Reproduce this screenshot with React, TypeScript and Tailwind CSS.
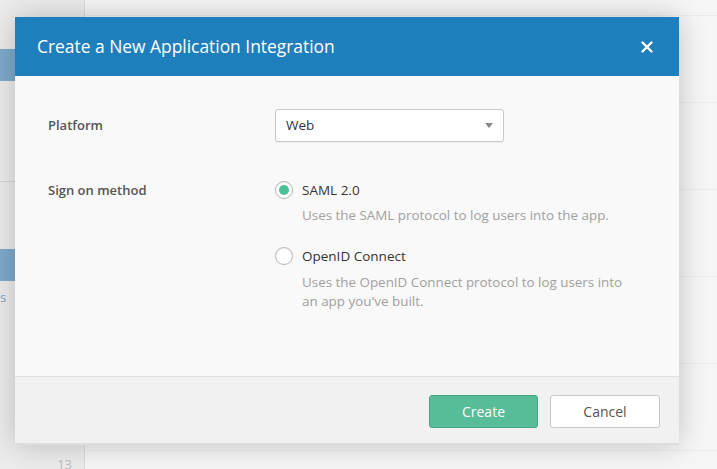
import { X } from 'lucide-react';

const font = { fontFamily: '"Open Sans", "Liberation Sans", sans-serif' };

function Radio({ checked }: { checked?: boolean }) {
  return (
    <span className="flex h-[18px] w-[18px] shrink-0 items-center justify-center rounded-full border border-[#b5b5b5] bg-white shadow-[inset_0_1px_1px_rgba(0,0,0,0.08)]">
      {checked && <span className="h-[10px] w-[10px] rounded-full bg-[#4cc198]" />}
    </span>
  );
}

export default function App() {
  return (
    <div className="relative h-[469px] w-[717px] overflow-hidden bg-[#f4f4f4]" style={font}>
      {/* page behind the overlay */}
      <div className="flex h-full">
        <div className="flex w-[85px] shrink-0 flex-col border-r border-[#dcdcdc] bg-[#ececec]">
          <div className="h-[49px]" />
          <div className="h-[32px] bg-[#7eaacb]" />
          <div className="h-[101px] border-b border-[#d6d6d6]" />
          <div className="h-[67px]" />
          <div className="h-[32px] bg-[#7eaacb]" />
          <div className="pt-[8px] text-[13px] leading-[16px] text-[#7ea6c8]">s</div>
          <div className="flex-1" />
          <div className="h-[12px] overflow-visible pr-[12px] text-right text-[13px] leading-[14px] text-[#bdbdbd]">13</div>
        </div>
        <div className="flex flex-1 flex-col bg-[#f6f6f6]">
          <div className="h-[16px] border-b border-[#ececec]" />
          <div className="h-[87px] border-b border-[#ececec]" />
          <div className="h-[87px] border-b border-[#ececec]" />
          <div className="h-[87px] border-b border-[#ececec]" />
          <div className="h-[87px] border-b border-[#ececec]" />
          <div className="h-[87px] border-b border-[#ececec]" />
        </div>
      </div>

      {/* modal */}
      <div className="absolute left-[15px] top-[17px] w-[664px] overflow-hidden shadow-[0_0_28px_rgba(0,0,0,0.22)]">
        <div className="flex h-[59px] items-center justify-between bg-[#1f7fbd] pl-[22px] pr-[23px]">
          <h2 className="text-[17.4px] font-normal text-white">Create a New Application Integration</h2>
          <X className="h-[18px] w-[18px] text-white" strokeWidth={3.2} />
        </div>

        <div className="h-[300px] bg-[#f9f9f9] px-[33px] pt-[33px]">
          <div className="flex items-center">
            <div className="w-[227px] text-[13px] font-semibold text-[#555]">Platform</div>
            <div className="flex h-[33px] w-[229px] items-center justify-between rounded-[3px] border border-[#c8c8c8] bg-white pl-[10px] pr-[10px] shadow-[0_1px_1px_rgba(0,0,0,0.05)]">
              <span className="text-[13.5px] text-[#333]">Web</span>
              <span className="h-0 w-0 border-x-[4px] border-t-[5px] border-x-transparent border-t-[#888]" />
            </div>
          </div>

          <div className="mt-[38px] flex">
            <div className="w-[227px] pt-[1px] text-[13px] font-semibold text-[#555]">Sign on method</div>
            <div className="flex flex-col">
              <div className="flex items-center gap-[9px]">
                <Radio checked />
                <span className="text-[13.5px] text-[#333]">SAML 2.0</span>
              </div>
              <p className="ml-[27px] mt-[6px] text-[13.4px] leading-[19px] text-[#a0a0a0]">
                Uses the SAML protocol to log users into the app.
              </p>
              <div className="mt-[21px] flex items-center gap-[9px]">
                <Radio />
                <span className="text-[13.5px] text-[#333]">OpenID Connect</span>
              </div>
              <p className="ml-[27px] mt-[6px] w-[326px] text-[13.4px] leading-[19px] text-[#a0a0a0]">
                Uses the OpenID Connect protocol to log users into an app you've built.
              </p>
            </div>
          </div>
        </div>

        <div className="flex h-[69px] items-center justify-end gap-[12px] border-t border-[#dedede] border-b-2 border-b-[#dddddd] bg-[#f1f1f1] pr-[19px] pt-[2px]">
          <button className="h-[33px] w-[109px] rounded-[3px] border border-[#48a582] bg-[#57bd99] text-[14px] text-white">
            Create
          </button>
          <button className="h-[33px] w-[110px] rounded-[3px] border border-[#c8c8c8] bg-white text-[14px] text-[#555]">
            Cancel
          </button>
        </div>
      </div>
    </div>
  );
}
